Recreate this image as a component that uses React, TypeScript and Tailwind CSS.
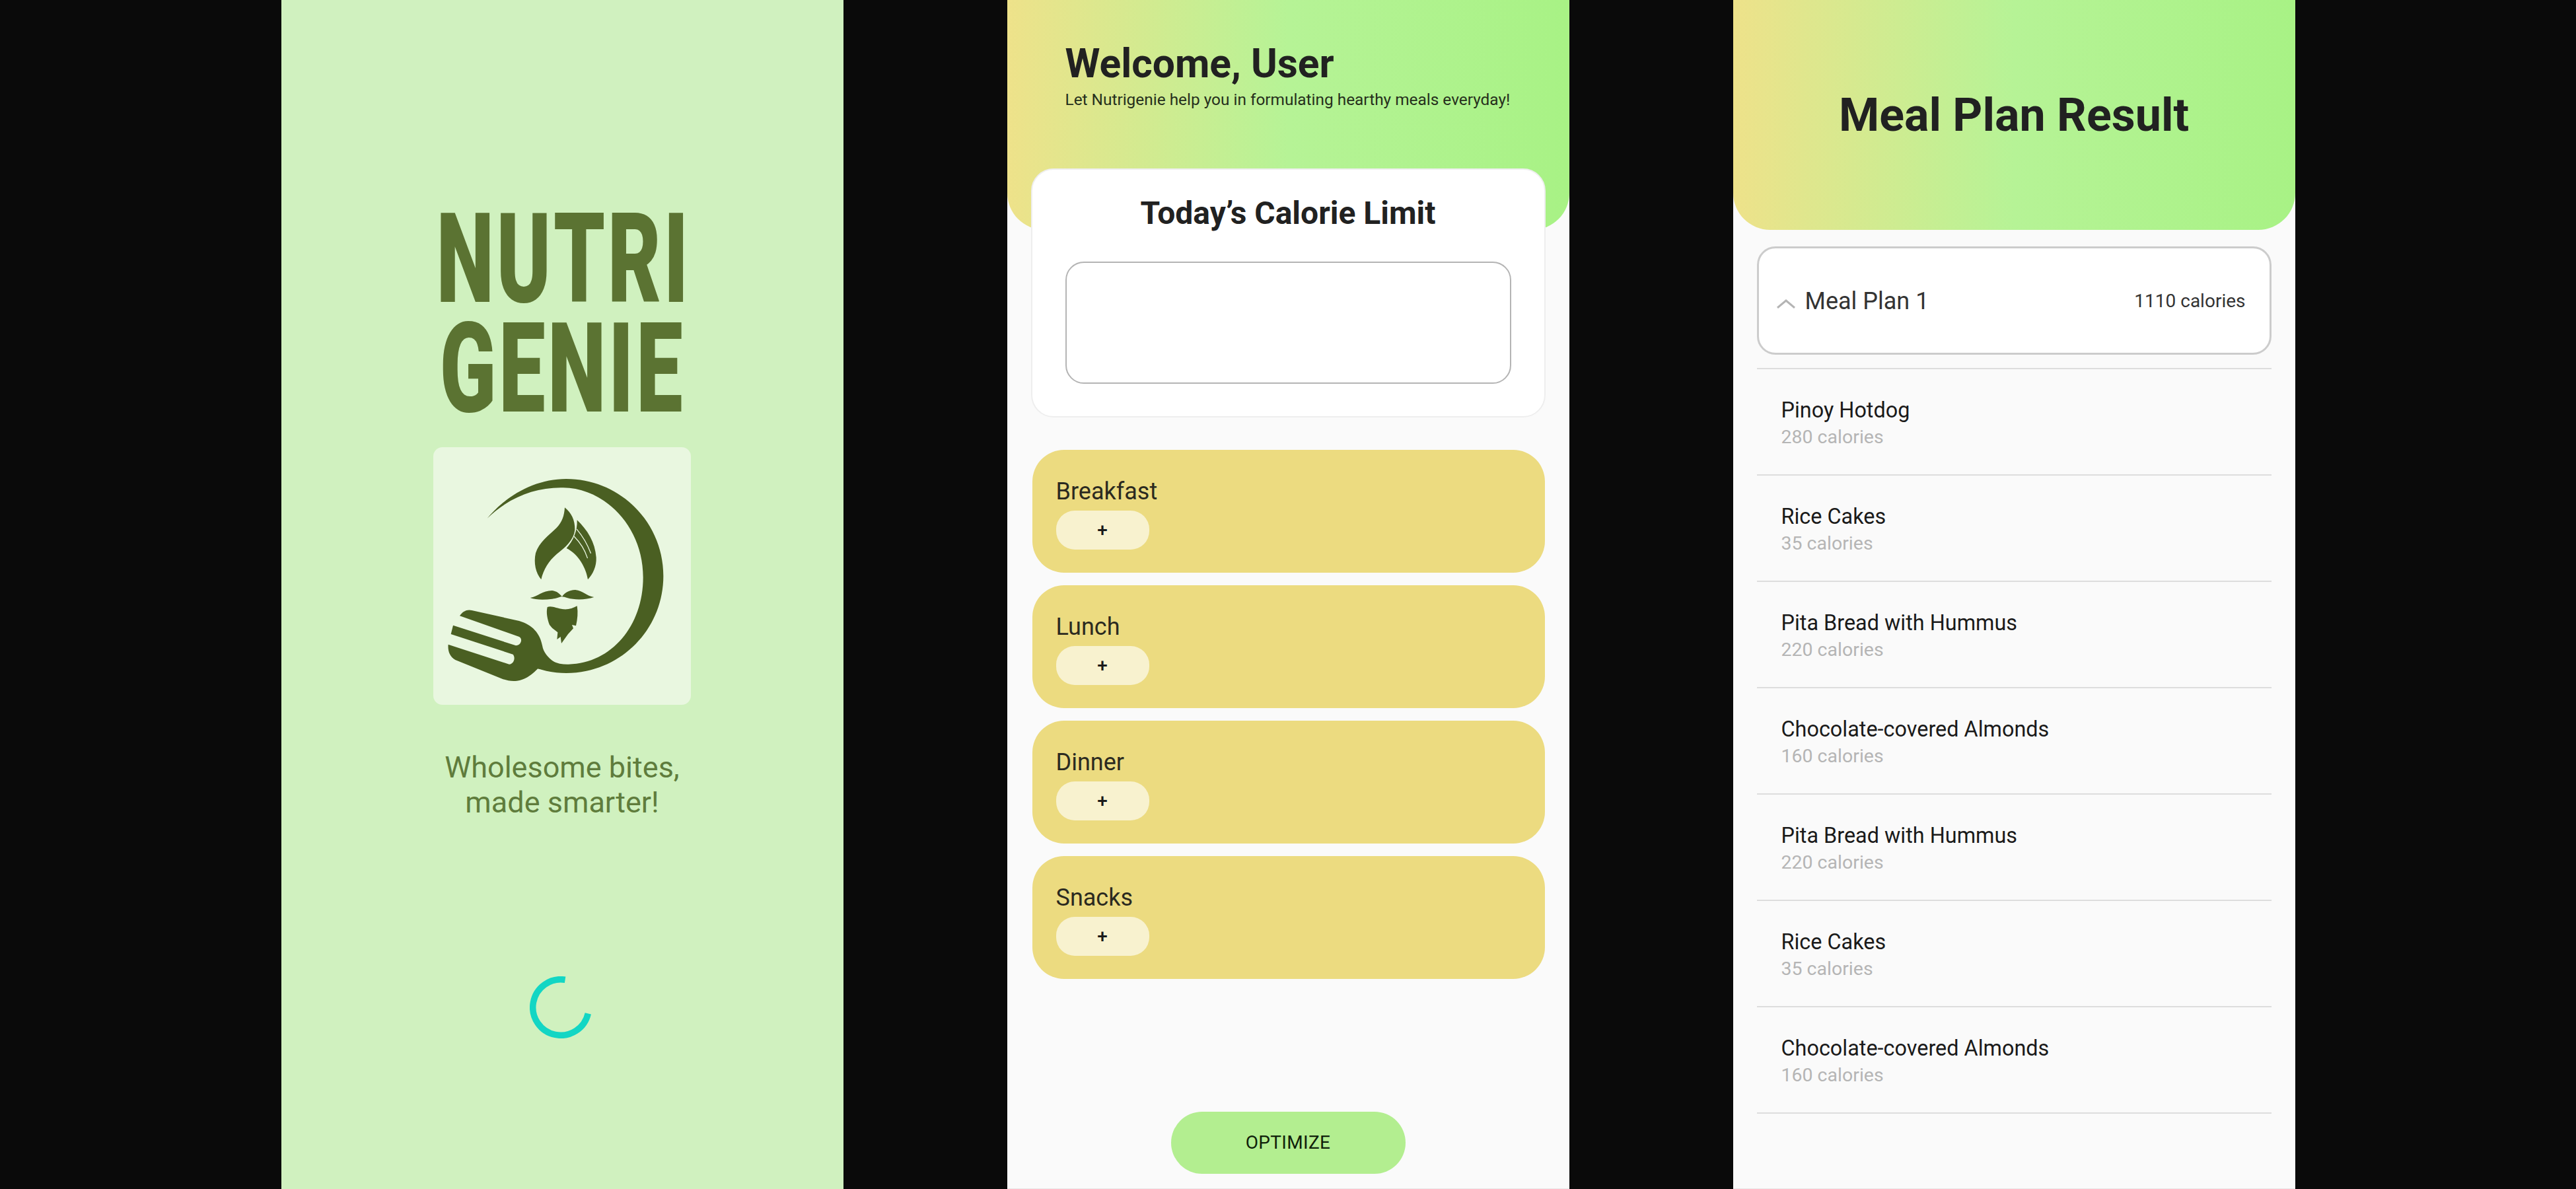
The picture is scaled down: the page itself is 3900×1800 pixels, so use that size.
const font = "font-['Roboto',sans-serif]"

const meals = [
  { name: "Pinoy Hotdog", cal: "280 calories" },
  { name: "Rice Cakes", cal: "35 calories" },
  { name: "Pita Bread with Hummus", cal: "220 calories" },
  { name: "Chocolate-covered Almonds", cal: "160 calories" },
  { name: "Pita Bread with Hummus", cal: "220 calories" },
  { name: "Rice Cakes", cal: "35 calories" },
  { name: "Chocolate-covered Almonds", cal: "160 calories" },
]

function Logo() {
  return (
    <svg viewBox="50 20 1170 1168" className="w-full h-full">
      <g fill="#4a5f22">
        {/* plate */}
        <path d="M295 342 C380 240 510 163 654 163 C898 163 1095 360 1095 604 C1095 848 898 1045 654 1045 C610 1045 565 1038 525 1025 L590 990 C615 1002 640 1006 665 1005 C860 1000 1003 830 1003 610 C1003 380 830 205 640 203 C510 200 390 250 295 342 Z" />
        {/* fork */}
        <path d="M170 785 C185 762 205 755 225 760 L440 808 C500 825 535 865 545 920 C550 950 570 975 600 995 L620 1040 L525 1025 C500 1050 470 1075 430 1080 C405 1083 385 1078 365 1072 L150 985 C125 970 115 945 118 915 L395 1005 C415 1005 425 975 412 960 L130 868 L140 828 L425 920 C448 920 458 890 440 880 Z" />
        {/* turban */}
        <path d="M647 293 C675 315 695 350 693 395 C688 440 650 475 610 505 C575 535 550 575 540 620 C515 590 505 545 515 500 C530 450 575 420 610 385 C635 360 645 330 647 293 Z" />
        <path d="M703 350 C750 395 785 450 790 520 C792 560 775 595 752 620 C745 570 710 505 655 478 C685 445 705 400 703 350 Z" />
        {/* moustache */}
        <path d="M490 703 C525 697 545 670 590 670 C610 672 625 685 635 698 C645 682 665 668 695 667 C730 670 745 695 780 700 C745 713 690 713 660 704 C650 700 640 698 632 698 C620 700 610 706 590 708 C555 713 515 713 490 703 Z" />
        {/* beard */}
        <path d="M568 745 C590 738 610 752 640 755 C665 757 685 750 703 740 C708 770 705 800 698 830 L680 826 L686 842 L662 868 L632 910 L628 880 L612 892 L615 860 L590 840 L578 826 C568 800 562 770 568 745 Z" />
      </g>
      <g fill="none" stroke="#e9f7e0" strokeWidth="4" strokeLinecap="round">
        <path d="M702 392 C730 425 752 465 765 500" />
        <path d="M690 425 C715 450 738 485 750 522" />
      </g>
    </svg>
  )
}

function SplashScreen() {
  return (
    <div className="w-[851px] h-[1800px] shrink-0 bg-[#d0f1bf] flex flex-col items-center pt-[309px]">
      <div className="flex flex-col items-center font-black text-[190px] leading-[166px] tracking-[6px] text-[#5b7332]">
        <span className="pl-[6px] scale-x-[0.652]">NUTRI</span>
        <span className="scale-x-[0.66]">GENIE</span>
      </div>
      <div className="w-[390px] h-[390px] mt-[36px] rounded-[14px] bg-[#e9f7e0]">
        <Logo />
      </div>
      <p className="mt-[68px] text-center text-[45px] leading-[53px] text-[#5f7c3c]">
        Wholesome bites,
        <br />
        made smarter!
      </p>
      <svg viewBox="0 0 94 94" className="w-[94px] h-[94px] mt-[237px] mr-[4px]">
        <path d="M53.6 5.2 A42.3 42.3 0 1 0 88.3 56.4" fill="none" stroke="#13d6c4" strokeWidth="9.5" />
      </svg>
    </div>
  )
}

function MealRow({ label }: { label: string }) {
  return (
    <div className="h-[186px] rounded-[48px] bg-[#ecdb80] pl-[36px] pt-[42px]">
      <p className="text-[36px] leading-[42px] text-[#2b2a20]">{label}</p>
      <div className="mt-[8px] w-[141px] h-[59px] rounded-[28px] bg-[#f8f2cf] flex items-center justify-center text-[28px] font-medium text-[#1a1a1a]">+</div>
    </div>
  )
}

function CalorieScreen() {
  return (
    <div className="w-[851px] h-[1800px] shrink-0 bg-[#fafafa] border-b border-[#e8e8e8] flex flex-col">
      <div className="h-[348px] shrink-0 rounded-b-[56px] bg-[linear-gradient(90deg,#eee28a_0%,#b6f396_50%,#a8f285_100%)] pl-[88px] pt-[62px]">
        <h1 className="text-[60.5px] leading-[70px] font-bold text-[#212121]">Welcome, User</h1>
        <p className="mt-[3px] text-[24.4px] leading-[32px] text-[#26301c]">Let Nutrigenie help you in formulating hearthy meals everyday!</p>
      </div>
      <div className="relative -mt-[93px] mx-[36px] h-[377px] rounded-[34px] border-2 border-[#eeeeee] bg-white px-[50px] pt-[38px]">
        <h2 className="text-center text-[48px] leading-[56px] font-bold text-[#212121]">Today’s Calorie Limit</h2>
        <div className="mt-[45px] h-[185px] rounded-[28px] border-2 border-[#b4b4b4] bg-white" />
      </div>
      <div className="mt-[49px] ml-[38px] mr-[37px] flex flex-col gap-[19px]">
        {["Breakfast", "Lunch", "Dinner", "Snacks"].map((m) => (
          <MealRow key={m} label={m} />
        ))}
      </div>
      <button className="mt-[201px] self-center w-[355px] h-[94px] rounded-[47px] bg-[#b3ee90] text-[28px] tracking-[0.3px] text-[#10210a]">OPTIMIZE</button>
    </div>
  )
}

function ResultScreen() {
  return (
    <div className="w-[851px] h-[1800px] shrink-0 bg-[#fafafa] border-b border-[#e8e8e8] flex flex-col">
      <div className="h-[348px] shrink-0 rounded-b-[56px] bg-[linear-gradient(90deg,#eee28a_0%,#b6f396_50%,#a8f285_100%)] flex items-center justify-center">
        <h1 className="text-[70px] leading-[84px] font-bold text-[#212121]">Meal Plan Result</h1>
      </div>
      <div className="mx-[36px] mt-[25px]">
        <div className="h-[164px] rounded-[28px] border-[3px] border-[#cccccc] bg-white flex items-center pl-[27px] pr-[36px]">
          <svg viewBox="0 0 28 14" className="w-[28px] h-[14px] mt-[10px] mr-[15px]">
            <path d="M1 13 L14 2 L27 13" fill="none" stroke="#b4b4b4" strokeWidth="3" />
          </svg>
          <span className="text-[36px] mt-[2px] text-[#333333]">Meal Plan 1</span>
          <span className="ml-auto text-[28px] mt-[1px] text-[#333333]">1110 calories</span>
        </div>
        <div className="mt-[20px] border-t-[2px] border-[#dddddd]">
          {meals.map((m, i) => (
            <div key={i} className="h-[161px] border-b-[2px] border-[#dddddd] pl-[37px] pt-[42px]">
              <p className="text-[32.4px] leading-[40px] text-[#1a1a1a]">{m.name}</p>
              <p className="mt-[3px] text-[28.5px] leading-[36px] text-[#b5b5b5]">{m.cal}</p>
            </div>
          ))}
        </div>
      </div>
    </div>
  )
}

export default function App() {
  return (
    <div className={`w-[3900px] h-[1800px] overflow-hidden bg-[#0a0a0a] flex justify-center gap-[248px] ${font}`}>
      <SplashScreen />
      <CalorieScreen />
      <ResultScreen />
    </div>
  )
}
